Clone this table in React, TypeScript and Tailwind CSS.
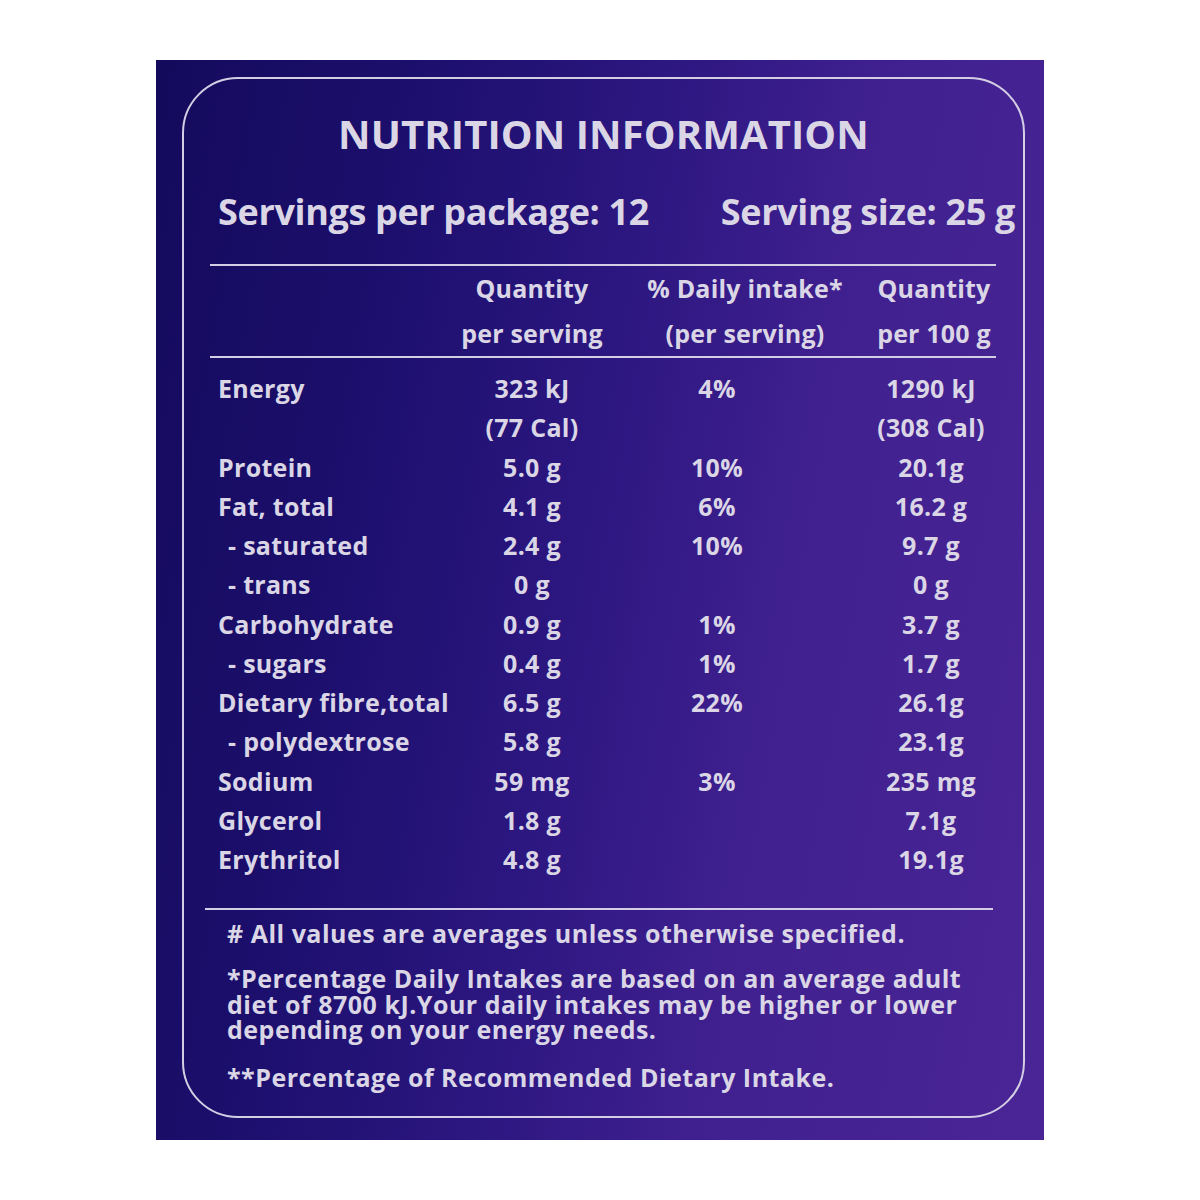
import React from "react";

type Row = { label: string; indent?: boolean; q: string; d: string; h: string };

const rows: Row[] = [
  { label: "Energy", q: "323 kJ", d: "4%", h: "1290 kJ" },
  { label: "", q: "(77 Cal)", d: "", h: "(308 Cal)" },
  { label: "Protein", q: "5.0 g", d: "10%", h: "20.1g" },
  { label: "Fat, total", q: "4.1 g", d: "6%", h: "16.2 g" },
  { label: "- saturated", indent: true, q: "2.4 g", d: "10%", h: "9.7 g" },
  { label: "- trans", indent: true, q: "0 g", d: "", h: "0 g" },
  { label: "Carbohydrate", q: "0.9 g", d: "1%", h: "3.7 g" },
  { label: "- sugars", indent: true, q: "0.4 g", d: "1%", h: "1.7 g" },
  { label: "Dietary fibre,total", q: "6.5 g", d: "22%", h: "26.1g" },
  { label: "- polydextrose", indent: true, q: "5.8 g", d: "", h: "23.1g" },
  { label: "Sodium", q: "59 mg", d: "3%", h: "235 mg" },
  { label: "Glycerol", q: "1.8 g", d: "", h: "7.1g" },
  { label: "Erythritol", q: "4.8 g", d: "", h: "19.1g" },
];

export default function App() {
  return (
    <div
      className="w-[1200px] h-[1200px] bg-white pt-[60px] pl-[156px]"
      style={{ fontFamily: '"Open Sans", "Noto Sans", sans-serif' }}
    >
      <div className="w-[888px] h-[1080px] pt-[17px] pl-[26px] bg-[linear-gradient(100deg,#140a5c_0%,#1c0f6d_25%,#2d1781_48%,#40208f_68%,#4a2596_100%)] text-[#dad6e5] font-bold">
        <div className="w-[843px] h-[1041px] border-2 border-[#d4cee4] rounded-[56px]">
          {/* Title */}
          <div className="pt-[31px] h-[79px] leading-[48px] text-[40px] text-center tracking-[0.1px]">
            NUTRITION INFORMATION
          </div>
          {/* Servings */}
          <div className="mt-[30px] h-[48px] leading-[48px] text-[36px] flex justify-between pl-[34px] w-[831px] whitespace-nowrap tracking-[-0.35px]">
            <span>Servings per package: 12</span>
            <span>Serving size: 25 g</span>
          </div>
          {/* line 1 */}
          <div className="mt-[28px] ml-[26px] w-[786px] h-[2px] bg-[#d4cee4]" />
          {/* header */}
          <div className="flex pl-[34px] text-[25px] leading-[45px] whitespace-nowrap tracking-[0.2px]">
            <div className="w-[234px] shrink-0" />
            <div className="w-[160px] shrink-0 text-center">
              <div>Quantity</div>
              <div>per serving</div>
            </div>
            <div className="w-[210px] shrink-0 ml-[28px] text-center">
              <div>% Daily intake*</div>
              <div>(per serving)</div>
            </div>
            <div className="w-[128px] shrink-0 ml-[20px] text-center">
              <div>Quantity</div>
              <div>per 100 g</div>
            </div>
          </div>
          {/* line 2 */}
          <div className="ml-[26px] w-[786px] h-[2px] bg-[#d4cee4]" />
          {/* body */}
          <div className="pt-[11px] text-[25px] tracking-[0.3px] whitespace-nowrap">
            {rows.map((r, i) => (
              <div key={i} className="flex pl-[34px] h-[39.25px] leading-[39.25px]">
                <div className={`w-[234px] shrink-0 ${r.indent ? "pl-[10px]" : ""}`}>{r.label}</div>
                <div className="w-[160px] shrink-0 text-center">{r.q}</div>
                <div className="w-[210px] shrink-0 text-center">{r.d}</div>
                <div className="w-[182px] shrink-0 ml-[18px] text-center">{r.h}</div>
              </div>
            ))}
          </div>
          {/* line 3 */}
          <div className="mt-[29px] ml-[21px] w-[788px] h-[2px] bg-[#d4cee4]" />
          {/* footnotes */}
          <div className="pl-[43px] text-[25px] tracking-[0.5px] whitespace-nowrap">
            <div className="mt-[10px] leading-[26px]">
              # All values are averages unless otherwise specified.
            </div>
            <div className="mt-[20px] leading-[25.5px]">
              *Percentage Daily Intakes are based on an average adult
              <br />
              diet of 8700 kJ.Your daily intakes may be higher or lower
              <br />
              depending on your energy needs.
            </div>
            <div className="mt-[21px] leading-[26px]">
              **Percentage of Recommended Dietary Intake.
            </div>
          </div>
        </div>
      </div>
    </div>
  );
}
